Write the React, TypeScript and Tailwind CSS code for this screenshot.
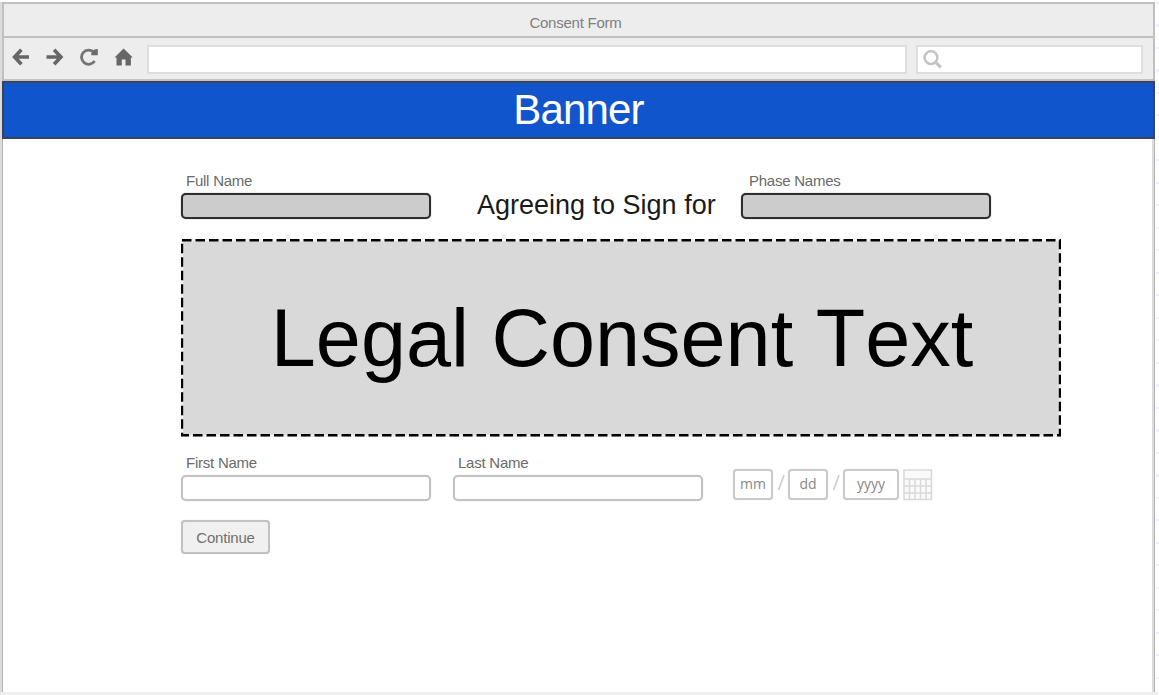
import React from 'react';

function BackIcon() {
  return (
    <svg width="18" height="18" viewBox="0 0 18 18" fill="none" stroke="#666" strokeWidth="3.6">
      <path d="M17 9H3.5M9.4 1.8L2.6 9L9.4 16.2" />
    </svg>
  );
}

function ForwardIcon() {
  return (
    <svg width="18" height="18" viewBox="0 0 18 18" fill="none" stroke="#666" strokeWidth="3.6">
      <path d="M.5 9H14M8.1 1.8L14.9 9L8.1 16.2" />
    </svg>
  );
}

function ReloadIcon() {
  return (
    <svg width="18" height="18" viewBox="0 0 18 18">
      <path d="M14.6 13A7.1 7.1 0 1 1 13.6 4.1" fill="none" stroke="#747474" strokeWidth="2.8" />
      <path d="M17.8 1V7.3H11.3V5.2L14.2 1.6Z" fill="#6a6a6a" />
    </svg>
  );
}

function HomeIcon() {
  return (
    <svg width="20" height="18" viewBox="0 0 20 18" fill="#666">
      <path d="M9.6 .4L18.8 9.4H16.9V17.4H11.5V11.6H7.8V17.4H2.5V9.4H.5Z" />
    </svg>
  );
}

function SearchIcon() {
  return (
    <svg width="20" height="20" viewBox="0 0 20 20" fill="none" stroke="#c4c4c4">
      <circle cx="8" cy="7.6" r="6.4" strokeWidth="2.6" />
      <path d="M12.4 12L17.8 17.4" strokeWidth="3.2" />
    </svg>
  );
}

function CalendarIcon() {
  return (
    <svg width="30" height="32" viewBox="0 0 30 32" fill="none" stroke="#d9d9d9" strokeWidth="1.5">
      <rect x="1" y="1" width="27.5" height="29.5" fill="#fafafa" />
      <path d="M1 10H28.5M1 17H28.5M1 24H28.5M6.5 10V31M12 10V31M17.5 10V31M23 10V31" />
    </svg>
  );
}

function Slash() {
  return (
    <svg className="mt-[5px]" width="15" height="17" viewBox="0 0 15 17">
      <path d="M5.5 16L11 1" stroke="#cfcfcf" strokeWidth="1.7" />
    </svg>
  );
}

function Field({
  label,
  filled = false,
  indent = 'pl-[5px]',
}: {
  label: string;
  filled?: boolean;
  indent?: string;
}) {
  return (
    <label className="flex w-[250px] flex-col">
      <span className={`h-[21px] text-[15px] leading-[17px] tracking-[-0.24px] text-[#6a6a6a] ${indent}`}>
        {label}
      </span>
      <span
        className={
          filled
            ? 'h-[26px] rounded-[5px] border-2 border-[#2d2e2d] bg-[#ccc] shadow-[0_0_1px_#555]'
            : 'h-[26px] rounded-[5px] border-2 border-[#c2c2c2] bg-white shadow-[0_0_1px_#ccc]'
        }
      />
    </label>
  );
}

function DatePart({ text, wide = false }: { text: string; wide?: boolean }) {
  return (
    <span
      className={`flex h-[31px] items-center justify-center rounded-[4px] border-2 border-[#cbcbcb] bg-white pb-[2px] font-['Open_Sans',sans-serif] text-[14px] font-medium leading-4 text-[#888] shadow-[0_0_1px_#ccc] ${
        wide ? 'w-[56px]' : 'w-[40px]'
      }`}
    >
      {text}
    </span>
  );
}

export default function App() {
  return (
    <div className="flex h-[695px] w-[1159px] flex-col overflow-hidden bg-white font-['Liberation_Sans',Arial,sans-serif]">
      <div className="flex h-[692px] pt-[2px]">
        <div className="w-[2px] bg-[#dcdcdc]" />
        <div className="flex w-[1154px] flex-col pr-px">
          <header className="flex flex-col border-x-2 border-t-2 border-[#c0c0c0] bg-[#ededed]">
            <div className="flex h-[34px] items-center justify-center border-b-2 border-[#c0c0c0] pr-[6px] pt-[6px] text-[15px] leading-4 tracking-[-0.24px] text-[#808080]">
              Consent Form
            </div>
            <div className="flex h-[43px] items-start border-b-2 border-[#c4c4c4] pl-[8px] pt-[7px]">
              <div className="flex w-[135px] items-start gap-4 pt-[3px]">
                <BackIcon />
                <ForwardIcon />
                <ReloadIcon />
                <HomeIcon />
              </div>
              <div className="h-[29px] w-[760px] border-2 border-[#dedede] bg-white" />
              <div className="ml-[9px] flex h-[29px] w-[227px] border-2 border-[#dedede] bg-white pl-[5px] pt-[3px]">
                <SearchIcon />
              </div>
            </div>
          </header>
          <div className="flex h-[58px] items-center justify-center border-2 border-[#3b4454] bg-[#1155cc] pb-px text-[42px] leading-[48px] tracking-[-0.8px] text-white">
            Banner
          </div>
          <main className="flex flex-1 flex-col border-l border-[#b3b3b3] pl-[178px] pt-[33px] shadow-[inset_-1px_0_0_#b3b3b3,inset_-3px_0_0_#dcdcdc]">
            <div className="flex h-[48px]">
              <Field label="Full Name" filled />
              <div className="mt-[17px] w-[310px] whitespace-nowrap pl-[46px] text-[27px] leading-[32px] text-[#1a1a1a]">
                Agreeing to Sign for
              </div>
              <Field label="Phase Names" filled indent="pl-[8px]" />
            </div>
            <div className="relative mt-[19px] flex h-[198px] w-[880px] items-center justify-center bg-[#d9d9d9] pl-[2px] text-[81px] leading-[92px] text-black [font-kerning:none]">
              Legal Consent Text
              <svg className="absolute left-0 top-0" width="880" height="198" fill="none" strokeWidth="2.4">
                <path d="M1 1.2H879V196.6H1Z" stroke="#f0f0f0" />
                <path d="M1 1.2H879V196.2H1Z" stroke="#000" strokeDasharray="9.5 4" />
              </svg>
            </div>
            <div className="mt-[17px] flex h-[48px]">
              <Field label="First Name" />
              <div className="w-[22px]" />
              <Field label="Last Name" />
              <div className="ml-[30px] mt-[15px] flex items-start">
                <DatePart text="mm" />
                <Slash />
                <DatePart text="dd" />
                <Slash />
                <DatePart text="yyyy" wide />
                <span className="ml-1">
                  <CalendarIcon />
                </span>
              </div>
            </div>
            <button className="mt-[18px] h-[34px] w-[89px] rounded-[4px] border-2 border-[#c2c2c2] bg-[#f0f0f0] pt-px text-[15px] leading-4 tracking-[-0.2px] text-[#707070] shadow-[0_0_1px_#ccc]">
              Continue
            </button>
          </main>
        </div>
        <div className="w-[3px] bg-[repeating-linear-gradient(to_bottom,#f0f0ff_0px,#f0f0ff_2px,#fff_2px,#fff_22.5px)]" />
      </div>
      <div className="h-[3px] bg-[#efefef]" />
    </div>
  );
}
